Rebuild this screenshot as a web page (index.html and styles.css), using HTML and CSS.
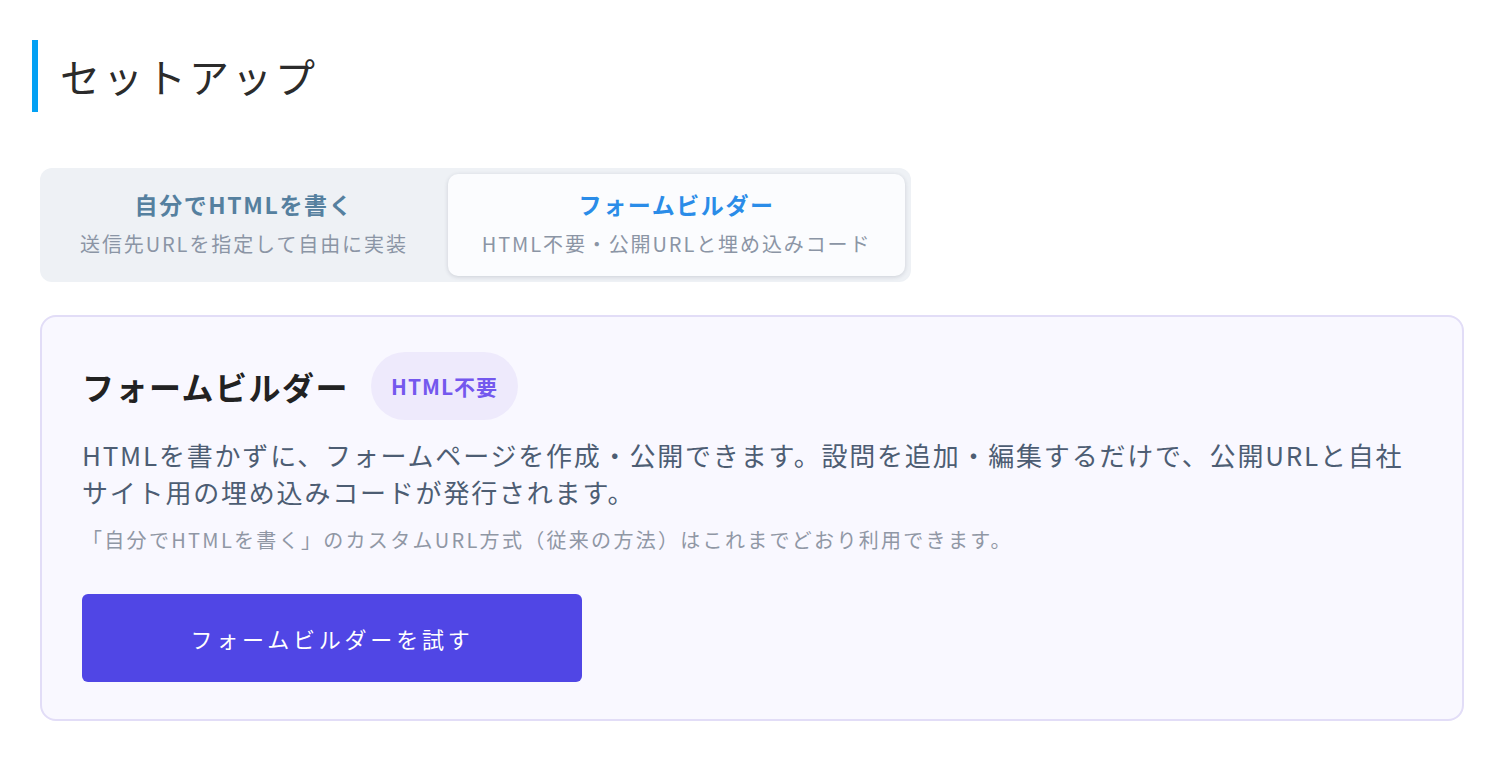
FILE: index.html
```html
<!DOCTYPE html>
<html lang="ja">
<head>
<meta charset="utf-8">
<title>セットアップ</title>
<link rel="stylesheet" href="styles.css">
</head>
<body>
<main class="page">
  <h1 class="page-title">セットアップ</h1>

  <div class="tabs">
    <button class="tab">
      <span class="tab-title">自分でHTMLを書く</span>
      <span class="tab-sub">送信先URLを指定して自由に実装</span>
    </button>
    <button class="tab tab-active">
      <span class="tab-title">フォームビルダー</span>
      <span class="tab-sub">HTML不要・公開URLと埋め込みコード</span>
    </button>
  </div>

  <section class="card">
    <div class="card-head">
      <h2 class="card-title">フォームビルダー</h2>
      <span class="badge">HTML不要</span>
    </div>
    <p class="card-desc">HTMLを書かずに、フォームページを作成・公開できます。設問を追加・編集するだけで、公開URLと自社サイト用の埋め込みコードが発行されます。</p>
    <p class="card-note">「自分でHTMLを書く」のカスタムURL方式（従来の方法）はこれまでどおり利用できます。</p>
    <button class="cta">フォームビルダーを試す</button>
  </section>
</main>
</body>
</html>
```

FILE: styles.css
```css
* { box-sizing: border-box; }

html, body {
  margin: 0;
  background: #ffffff;
}

body {
  font-family: "Noto Sans CJK JP", "Noto Sans", "Liberation Sans", sans-serif;
  color: #2b2b2b;
}

.page {
  padding: 40px 40px;
}

.page-title {
  margin: 0 0 0 -8px;
  height: 72px;
  display: flex;
  align-items: center;
  border-left: 6px solid #03a1f4;
  padding-left: 22px;
  font-size: 40px;
  font-weight: 400;
  letter-spacing: 3px;
  color: #2b2b2b;
}

.tabs {
  margin-top: 56px;
  display: inline-flex;
  gap: 6px;
  padding: 6px;
  background: #eef1f5;
  border-radius: 12px;
}

.tab {
  font-family: inherit;
  border: none;
  background: transparent;
  border-radius: 10px;
  padding: 13px 34px 17px;
  display: flex;
  flex-direction: column;
  align-items: center;
  cursor: pointer;
}

.tab-active {
  background: #fbfcfe;
  box-shadow: 0 1px 4px rgba(30, 40, 60, 0.16);
}

.tab-title {
  font-size: 23px;
  line-height: 34px;
  font-weight: 700;
  letter-spacing: 1.6px;
  color: #55809f;
}

.tab-active .tab-title {
  color: #2a8ce8;
}

.tab-sub {
  margin-top: 8px;
  font-size: 20px;
  line-height: 30px;
  letter-spacing: 1.9px;
  color: #8b95a5;
}

.card {
  margin-top: 33px;
  border: 2px solid #e2ddf7;
  background: #f9f8ff;
  border-radius: 16px;
  padding: 35px 40px 37px;
}

.card-head {
  display: flex;
  align-items: center;
  gap: 22px;
}

.card-title {
  margin: 0;
  font-size: 32px;
  font-weight: 700;
  letter-spacing: 1.5px;
  color: #222222;
}

.badge {
  height: 68px;
  display: inline-flex;
  align-items: center;
  padding: 0 20px;
  border-radius: 34px;
  background: #eeeafc;
  color: #7458ee;
  font-size: 21px;
  font-weight: 700;
  letter-spacing: 1px;
}

.card-desc {
  margin: 16px 0 0;
  font-size: 26px;
  line-height: 37px;
  letter-spacing: 1.8px;
  color: #4d5d73;
}

.card-note {
  margin: 15px 0 0;
  font-size: 20px;
  line-height: 30px;
  letter-spacing: 2.3px;
  color: #9097a5;
}

.cta {
  margin-top: 39px;
  width: 500px;
  height: 88px;
  border: none;
  border-radius: 6px;
  background: #5046e5;
  color: #ffffff;
  font-family: inherit;
  font-size: 22px;
  letter-spacing: 3.8px;
  cursor: pointer;
  display: block;
}
```
